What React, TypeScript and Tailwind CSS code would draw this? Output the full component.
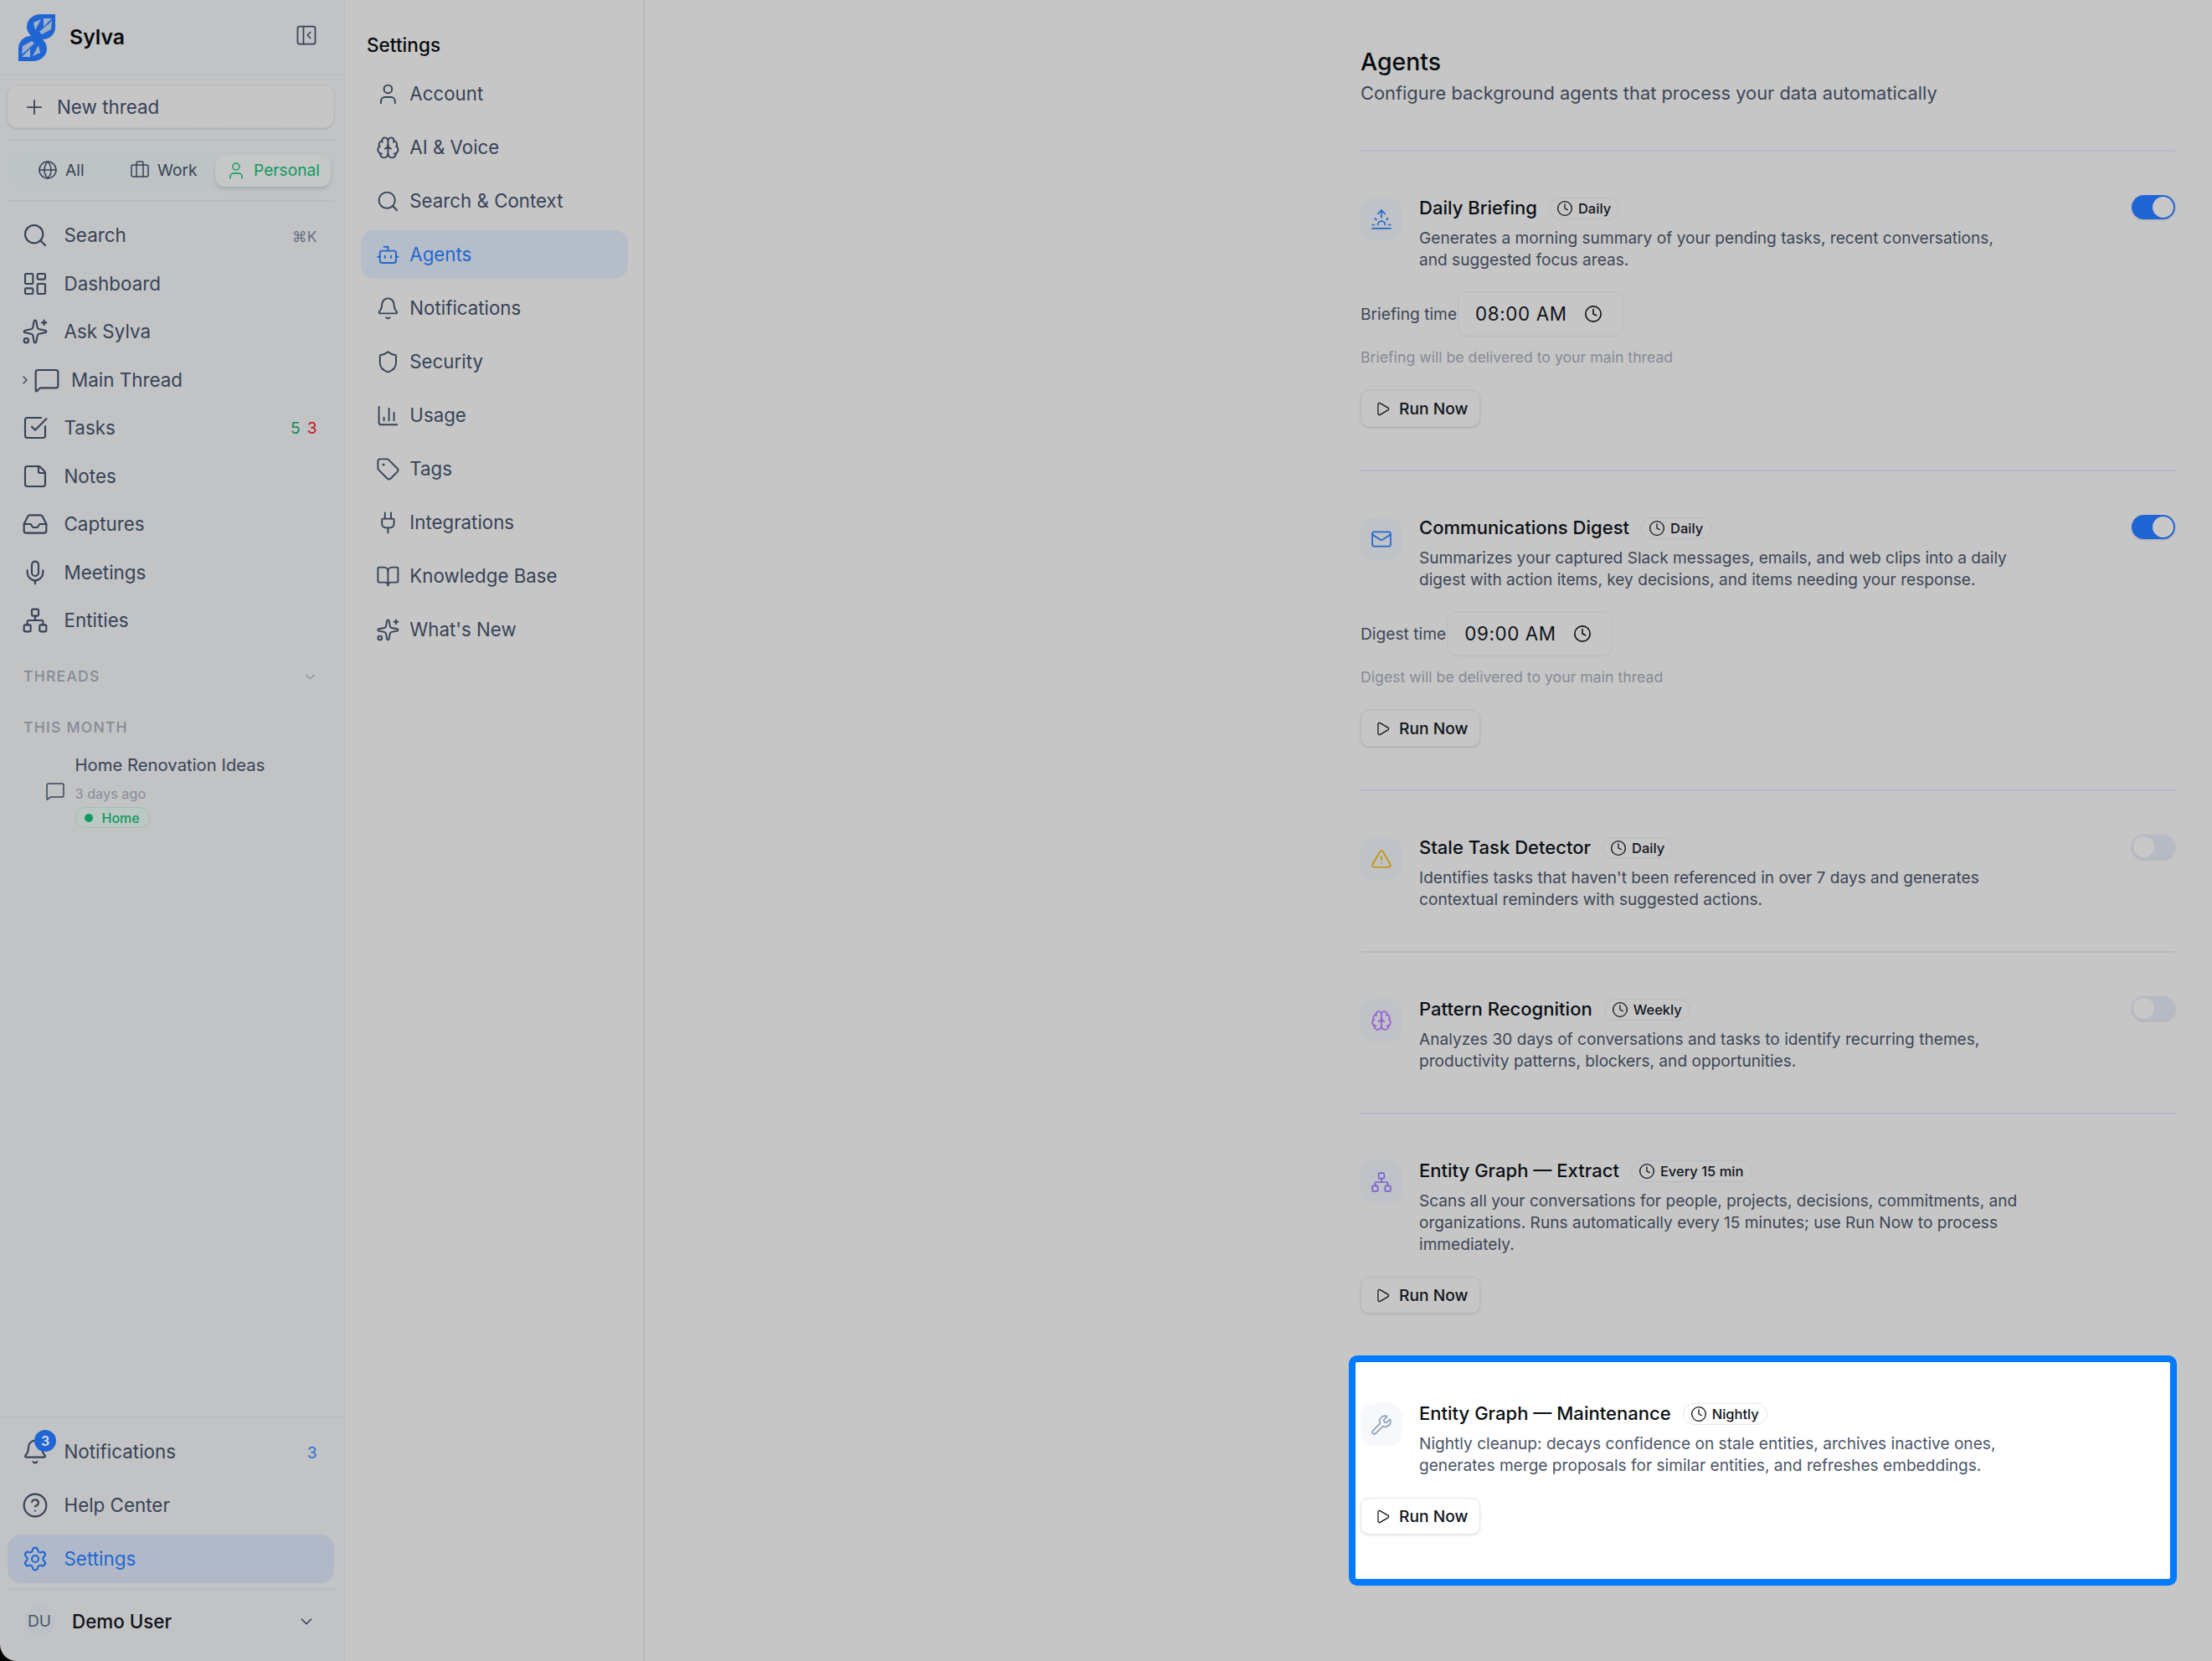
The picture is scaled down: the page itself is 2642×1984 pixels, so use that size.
import {
  Bell,
  Bot,
  BookOpen,
  Brain,
  Briefcase,
  ChartColumn,
  ChevronDown,
  ChevronRight,
  CircleHelp,
  Clock,
  Globe,
  Inbox,
  LayoutDashboard,
  Mail,
  MessageSquare,
  Mic,
  Network,
  PanelLeftClose,
  Play,
  Plug,
  Plus,
  Search,
  Settings,
  Shield,
  Sparkles,
  SquareCheckBig,
  StickyNote,
  Sunrise,
  Tag,
  TriangleAlert,
  User,
  Wrench,
} from "lucide-react";
import type { ComponentType, ReactNode } from "react";

type Icon = ComponentType<{ size?: number; strokeWidth?: number; className?: string }>;

// ---------------------------------------------------------------------------
// Logo
// ---------------------------------------------------------------------------
function Logo() {
  return (
    <svg width="44" height="56" viewBox="0 0 44 56" className="shrink-0">
      <path
        d="M44 0H26C17 0 10 7 10 15C10 19 12 23 15 26C7 26 0 32 0 41V56H18C27 56 34 49 34 41C34 37 32 33 29 30C37 30 44 24 44 16Z"
        fill="#1f66d4"
      />
      <g fill="#c2c3c5" opacity="0.8">
        <polygon points="18,10 27,6 20,19" />
        <polygon points="30,5 40,5 30,15" />
        <polygon points="25,21 40,8 39,18 28,24" />
        <polygon points="26,46 17,50 24,37" />
        <polygon points="14,51 4,51 14,41" />
        <polygon points="19,35 4,48 5,38 16,32" />
      </g>
    </svg>
  );
}

// ---------------------------------------------------------------------------
// Left sidebar
// ---------------------------------------------------------------------------
function NavRow({
  icon: I,
  label,
  right,
  active,
  badge,
}: {
  icon: Icon;
  label: string;
  right?: ReactNode;
  active?: boolean;
  badge?: boolean;
}) {
  return (
    <div
      className={`ml-[9px] mr-[12.5px] flex h-[57.5px] items-center gap-[18.5px] rounded-[16px] pl-[17px] pr-[20px] text-[22.4px] ${
        active ? "bg-[#b1b9c8] text-[#2267d2]" : "text-[#374357]"
      }`}
    >
      <span className="relative shrink-0">
        <I size={32} strokeWidth={1.6} />
        {badge && (
          <span className="absolute left-[15px] top-[-10px] flex h-[26px] w-[26px] items-center justify-center rounded-full bg-[#1f66d4] text-[16px] font-semibold text-[#d8dde6]">
            3
          </span>
        )}
      </span>
      <span>{label}</span>
      {right && <span className="ml-auto">{right}</span>}
    </div>
  );
}

function Sidebar() {
  return (
    <aside className="flex w-[412px] shrink-0 flex-col rounded-bl-[20px] border-r-[1.5px] border-[#b6bac2] bg-[#c2c3c5]">
      <div className="flex h-[90px] shrink-0 items-center justify-between border-b-[1.5px] border-[#b6bac2] pl-[22px] pr-[31px]">
        <div className="flex items-center gap-[17px]">
          <Logo />
          <span className="text-[24.8px] font-semibold text-[#0a0c10]">Sylva</span>
        </div>
        <PanelLeftClose size={28} strokeWidth={1.5} className="mb-[6px] text-[#374357]" />
      </div>

      <div className="ml-[9px] mr-[12.5px] mt-[12px] flex h-[51px] items-center gap-[13px] rounded-[12px] border-[1.5px] border-dashed border-[#b6bac2] bg-[#c6c6c6] pl-[17px] text-[22.4px] text-[#374357] shadow-sm">
        <Plus size={28} strokeWidth={1.5} />
        New thread
      </div>

      <div className="ml-[9px] mr-[12.5px] mt-[13px] h-[2px] shrink-0 bg-[#b6bcc4]" />

      <div className="ml-[9px] mr-[12.5px] mt-[13px] flex h-[45px] items-center rounded-[14px] bg-[#bec3c5] text-[19.2px] text-[#374357]">
        <div className="flex w-[125px] items-center gap-[9px] pl-[36px]">
          <Globe size={24} strokeWidth={1.5} />
          All
        </div>
        <div className="flex w-[123px] items-center gap-[9px] pl-[21px]">
          <Briefcase size={24} strokeWidth={1.5} />
          Work
        </div>
        <div className="flex h-[38px] w-[138px] items-center gap-[9px] rounded-[12px] bg-[#c6c7c7] pl-[13px] text-[#0f9a5e] shadow-md">
          <User size={24} strokeWidth={1.5} />
          Personal
        </div>
      </div>

      <div className="ml-[9px] mr-[12.5px] mt-[13px] h-[2px] shrink-0 bg-[#b6bcc4]" />

      <div className="mt-[11.5px]">
        <NavRow
          icon={Search}
          label="Search"
          right={<span className="text-[17.6px] text-[#667083]">⌘K</span>}
        />
        <NavRow icon={LayoutDashboard} label="Dashboard" />
        <NavRow icon={Sparkles} label="Ask Sylva" />
        <div className="ml-[9px] mr-[12.5px] flex h-[57.5px] items-center pl-[13px] text-[22.4px] text-[#374357]">
          <ChevronRight size={16} strokeWidth={2} />
          <span className="ml-[2px] shrink-0">
            <MessageSquare size={32} strokeWidth={1.6} />
          </span>
          <span className="ml-[13px]">Main Thread</span>
        </div>
        <NavRow
          icon={SquareCheckBig}
          label="Tasks"
          right={
            <span className="flex gap-[8px] text-[19.2px]">
              <span className="text-[#0e8a55]">5</span>
              <span className="text-[#c4101c]">3</span>
            </span>
          }
        />
        <NavRow icon={StickyNote} label="Notes" />
        <NavRow icon={Inbox} label="Captures" />
        <NavRow icon={Mic} label="Meetings" />
        <NavRow icon={Network} label="Entities" />
      </div>

      <div className="mt-[25.3px] flex items-center justify-between pl-[28px] pr-[31px] text-[17.6px] font-medium tracking-[1.2px] text-[#858b96]">
        THREADS
        <ChevronDown size={19} strokeWidth={1.6} />
      </div>
      <div className="mt-[34px] pl-[28px] text-[17.6px] font-medium tracking-[1.2px] text-[#858b96]">
        THIS MONTH
      </div>

      <div className="mt-[19.3px] flex items-center gap-[11.5px] pl-[54px]">
        <MessageSquare size={24} strokeWidth={1.5} className="text-[#374357]" />
        <div>
          <div className="text-[20.3px] leading-[26px] text-[#374357]">Home Renovation Ideas</div>
          <div className="mt-[7.7px] text-[16.3px] leading-[26px] text-[#868c97]">3 days ago</div>
          <div className="mt-[3.3px] flex h-[25px] w-[89px] items-center gap-[11px] rounded-full border border-[#9fbcb0] bg-[#bcc8c3] pl-[10px] text-[16px] font-medium text-[#0f9a5e]">
            <span className="h-[10px] w-[10px] rounded-full bg-[#0f9a5e]" />
            Home
          </div>
        </div>
      </div>

      <div className="mt-auto border-t-[1.5px] border-[#b6bac2] pt-[13px]">
        <div className="flex flex-col gap-[6.5px]">
          <NavRow
            icon={Bell}
            label="Notifications"
            badge
            right={<span className="text-[19.2px] text-[#2a6fd8]">3</span>}
          />
          <NavRow icon={CircleHelp} label="Help Center" />
          <NavRow icon={Settings} label="Settings" active />
        </div>
        <div className="ml-[9px] mr-[12.5px] mt-[6px] h-[2px] bg-[#b6bac4]" />
        <div className="flex h-[85.5px] items-center pb-[9px] pl-[28px] pr-[34px]">
          <span className="flex h-[38px] w-[38px] items-center justify-center rounded-full bg-[#bcc1c5] text-[19.2px] text-[#4a5568]">
            DU
          </span>
          <span className="ml-[20px] text-[22.4px] font-medium text-[#0f1218]">Demo User</span>
          <ChevronDown size={22} strokeWidth={1.8} className="ml-auto text-[#374357]" />
        </div>
      </div>
    </aside>
  );
}

// ---------------------------------------------------------------------------
// Settings nav
// ---------------------------------------------------------------------------
const SETTINGS_NAV: { icon: Icon; label: string }[] = [
  { icon: User, label: "Account" },
  { icon: Brain, label: "AI & Voice" },
  { icon: Search, label: "Search & Context" },
  { icon: Bot, label: "Agents" },
  { icon: Bell, label: "Notifications" },
  { icon: Shield, label: "Security" },
  { icon: ChartColumn, label: "Usage" },
  { icon: Tag, label: "Tags" },
  { icon: Plug, label: "Integrations" },
  { icon: BookOpen, label: "Knowledge Base" },
  { icon: Sparkles, label: "What's New" },
];

function SettingsNav() {
  return (
    <nav className="w-[358px] shrink-0 border-r-[2px] border-[#b8bac2] bg-[#c6c6c6]">
      <div className="mt-[36px] h-[36px] pl-[26px] text-[22.6px] font-medium leading-[36px] text-[#0a0c10]">
        Settings
      </div>
      <div className="ml-[19px] mr-[18.5px] mt-[11px] flex flex-col gap-[6px]">
        {SETTINGS_NAV.map((item) => (
          <div
            key={item.label}
            className={`flex h-[58px] items-center gap-[11.5px] rounded-[16px] pl-[18px] text-[22.3px] ${
              item.label === "Agents" ? "bg-[#b5bdc8] text-[#2267d2]" : "text-[#374357]"
            }`}
          >
            <item.icon size={28.8} strokeWidth={1.6} />
            {item.label}
          </div>
        ))}
      </div>
    </nav>
  );
}

// ---------------------------------------------------------------------------
// Agent cards
// ---------------------------------------------------------------------------
function Toggle({ on }: { on?: boolean }) {
  return (
    <div
      className={`flex h-[29px] w-[52px] shrink-0 items-center rounded-full px-[2px] shadow-sm ${
        on ? "justify-end bg-[#1f66d4]" : "justify-start bg-[#b5bac4]"
      }`}
    >
      <span className="h-[25px] w-[25px] rounded-full bg-[#c8c8c8]" />
    </div>
  );
}

function RunNow({ light }: { light?: boolean }) {
  return (
    <div
      className={`flex h-[44px] w-[143px] items-center gap-[10px] rounded-[10px] border-[1.5px] pl-[16px] text-[19.2px] font-medium shadow-sm ${
        light ? "border-[#e5e8ef] bg-white text-[#10141b]" : "border-[#b6bac4] bg-[#c6c6c6] text-[#10141b]"
      }`}
    >
      <Play size={19} strokeWidth={1.6} />
      Run Now
    </div>
  );
}

function AgentHead({
  icon: I,
  iconClass,
  title,
  schedule,
  desc,
  toggle,
  light,
}: {
  icon: Icon;
  iconClass: string;
  title: string;
  schedule: string;
  desc: string;
  toggle?: "on" | "off";
  light?: boolean;
}) {
  return (
    <div className="flex items-start justify-between">
      <div className="flex gap-[20px] pt-[3px]">
        <div
          className={`flex h-[51px] w-[50px] shrink-0 items-center justify-center rounded-[16px] ${
            light ? "bg-[#f6f8fb]" : "bg-[#bfc2c6]"
          } ${iconClass}`}
        >
          <I size={26} strokeWidth={1.6} />
        </div>
        <div>
          <div className="flex h-[26px] items-center gap-[14px]">
            <span className="text-[22.05px] font-medium text-[#0c0f14]">{title}</span>
            <span
              className={`flex h-[26px] items-center gap-[6px] rounded-full border-[1.5px] pl-[8px] pr-[9px] text-[16.5px] font-medium text-[#12161d] ${
                light ? "border-[#e5e8ef]" : "border-[#b6bac4]"
              }`}
            >
              <Clock size={20} strokeWidth={1.6} />
              {schedule}
            </span>
          </div>
          <p
            className={`mt-[9px] w-[718px] text-[19.12px] leading-[26px] ${
              light ? "text-[#4b5567]" : "text-[#3d4656]"
            }`}
          >
            {desc}
          </p>
        </div>
      </div>
      {toggle && <Toggle on={toggle === "on"} />}
    </div>
  );
}

function TimeField({ label, time, note }: { label: string; time: string; note: string }) {
  return (
    <>
      <div className="mt-[25px] flex items-center gap-[1px]">
        <span className="text-[19.2px] text-[#3d4656]">{label}</span>
        <div className="flex h-[54px] items-center gap-[20px] rounded-[12px] border-[1.5px] border-[#b6bac4] pl-[20px] pr-[24px] text-[22.4px] tracking-[0.6px] text-[#0f1218]">
          {time}
          <Clock size={22} strokeWidth={1.8} />
        </div>
      </div>
      <div className="mt-[12px] h-[26px] text-[17.7px] leading-[26px] text-[#858b96]">{note}</div>
    </>
  );
}

function Agents() {
  return (
    <main className="flex flex-1 justify-end bg-[#c6c6c6] pr-[44px]">
      <div className="w-[973px]">
        <h1 className="mt-[52px] text-[28.4px] font-medium leading-[44px] text-[#0a0c10]">Agents</h1>
        <p className="mt-[-2px] h-[35px] text-[21.85px] leading-[35px] text-[#3d4656]">
          Configure background agents that process your data automatically
        </p>

        <section className="mt-[50px] border-t-[2px] border-[#b5b9c4] pb-[51px] pt-[52px]">
          <AgentHead
            icon={Sunrise}
            iconClass="text-[#2267d2]"
            title="Daily Briefing"
            schedule="Daily"
            toggle="on"
            desc="Generates a morning summary of your pending tasks, recent conversations, and suggested focus areas."
          />
          <TimeField
            label="Briefing time"
            time="08:00 AM"
            note="Briefing will be delivered to your main thread"
          />
          <div className="mt-[26px]">
            <RunNow />
          </div>
        </section>

        <section className="border-t-[2px] border-[#b5b9c4] pb-[51px] pt-[52px]">
          <AgentHead
            icon={Mail}
            iconClass="text-[#2267d2]"
            title="Communications Digest"
            schedule="Daily"
            toggle="on"
            desc="Summarizes your captured Slack messages, emails, and web clips into a daily digest with action items, key decisions, and items needing your response."
          />
          <TimeField
            label="Digest time"
            time="09:00 AM"
            note="Digest will be delivered to your main thread"
          />
          <div className="mt-[26px]">
            <RunNow />
          </div>
        </section>

        <section className="border-t-[2px] border-[#b5b9c4] pb-[49px] pt-[52px]">
          <AgentHead
            icon={TriangleAlert}
            iconClass="text-[#c79100]"
            title="Stale Task Detector"
            schedule="Daily"
            toggle="off"
            desc="Identifies tasks that haven't been referenced in over 7 days and generates contextual reminders with suggested actions."
          />
        </section>

        <section className="border-t-[2px] border-[#b5b9c4] pb-[49px] pt-[52px]">
          <AgentHead
            icon={Brain}
            iconClass="text-[#9a5fd6]"
            title="Pattern Recognition"
            schedule="Weekly"
            toggle="off"
            desc="Analyzes 30 days of conversations and tasks to identify recurring themes, productivity patterns, blockers, and opportunities."
          />
        </section>

        <section className="border-t-[2px] border-[#b5b9c4] pb-[50px] pt-[52px]">
          <AgentHead
            icon={Network}
            iconClass="text-[#7b62d4]"
            title="Entity Graph — Extract"
            schedule="Every 15 min"
            desc="Scans all your conversations for people, projects, decisions, commitments, and organizations. Runs automatically every 15 minutes; use Run Now to process immediately."
          />
          <div className="mt-[26px]">
            <RunNow />
          </div>
        </section>

        {/* Highlighted card */}
        <section className="ml-[-14px] mr-[-2px] rounded-[10px] border-[8px] border-[#007aff] bg-white pb-[53px] pl-[6px] pt-[46px]">
          <AgentHead
            light
            icon={Wrench}
            iconClass="text-[#8fa0b8]"
            title="Entity Graph — Maintenance"
            schedule="Nightly"
            desc="Nightly cleanup: decays confidence on stale entities, archives inactive ones, generates merge proposals for similar entities, and refreshes embeddings."
          />
          <div className="mt-[26px]">
            <RunNow light />
          </div>
        </section>
      </div>
    </main>
  );
}

export default function App() {
  return (
    <div
      className="flex h-[1984px] w-[2642px] overflow-hidden bg-black"
      style={{ fontFamily: "Inter, 'Noto Sans', sans-serif" }}
    >
      <Sidebar />
      <SettingsNav />
      <Agents />
    </div>
  );
}
